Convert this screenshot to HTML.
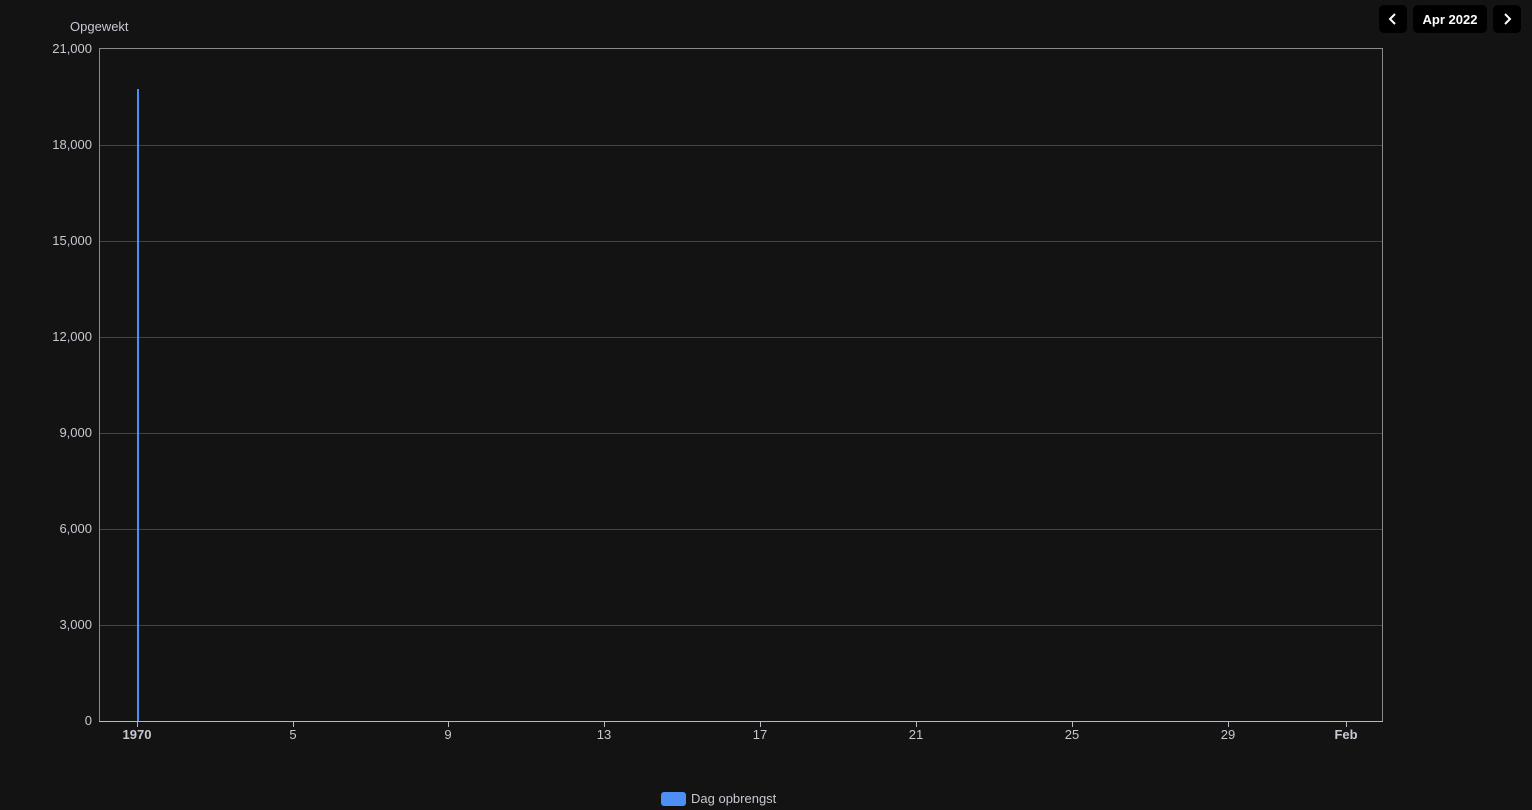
<!DOCTYPE html>
<html><head><meta charset="utf-8"><style>
html,body{margin:0;padding:0;background:#131313;width:1532px;height:810px;overflow:hidden;font-family:"Liberation Sans",sans-serif}
.btn{position:absolute;top:5px;height:28px;background:#000;border-radius:5px;color:#fff;display:flex;align-items:center;justify-content:center;z-index:2}
</style></head><body>
<svg width="1532" height="810" style="position:absolute;left:0;top:0" font-family="Liberation Sans, sans-serif" font-size="13" fill="#c8c8d2">
<g stroke="#444" stroke-width="1">
<line x1="99" x2="1382" y1="145.5" y2="145.5"/>
<line x1="99" x2="1382" y1="241.5" y2="241.5"/>
<line x1="99" x2="1382" y1="337.5" y2="337.5"/>
<line x1="99" x2="1382" y1="433.5" y2="433.5"/>
<line x1="99" x2="1382" y1="529.5" y2="529.5"/>
<line x1="99" x2="1382" y1="625.5" y2="625.5"/>
</g>
<rect x="99.5" y="48.5" width="1283" height="673" fill="none" stroke="#8a8a8a"/>
<line x1="99" x2="1383" y1="721.5" y2="721.5" stroke="#b8b8c0"/>
<line x1="138" x2="138" y1="89" y2="721" stroke="#4d8ff5" stroke-width="2"/>
<g stroke="#b8b8c0">
<line x1="137.5" x2="137.5" y1="722" y2="727"/><line x1="293.5" x2="293.5" y1="722" y2="727"/>
<line x1="448.5" x2="448.5" y1="722" y2="727"/><line x1="604.5" x2="604.5" y1="722" y2="727"/>
<line x1="760.5" x2="760.5" y1="722" y2="727"/><line x1="916.5" x2="916.5" y1="722" y2="727"/>
<line x1="1072.5" x2="1072.5" y1="722" y2="727"/><line x1="1228.5" x2="1228.5" y1="722" y2="727"/>
<line x1="1346.5" x2="1346.5" y1="722" y2="727"/>
</g>
<text x="70" y="31">Opgewekt</text>
<g text-anchor="end">
<text x="92" y="53">21,000</text><text x="92" y="149">18,000</text><text x="92" y="245">15,000</text>
<text x="92" y="341">12,000</text><text x="92" y="437">9,000</text><text x="92" y="533">6,000</text>
<text x="92" y="629">3,000</text><text x="92" y="725">0</text>
</g>
<g text-anchor="middle">
<text x="137" y="739" font-weight="bold">1970</text><text x="293" y="739">5</text><text x="448" y="739">9</text>
<text x="604" y="739">13</text><text x="760" y="739">17</text><text x="916" y="739">21</text>
<text x="1072" y="739">25</text><text x="1228" y="739">29</text><text x="1346" y="739" font-weight="bold">Feb</text>
</g>
<rect x="661" y="792" width="25" height="14" rx="3" fill="#4d8ff5"/>
<text x="691" y="803">Dag opbrengst</text>
</svg>
<div class="btn" style="left:1379px;width:28px"><svg width="14" height="14" viewBox="0 0 14 14"><path d="M9 2 L4 7 L9 12" stroke="#fff" stroke-width="2" fill="none"/></svg></div>
<div class="btn" style="left:1413px;width:74px;font-size:13px;font-weight:bold">Apr 2022</div>
<div class="btn" style="left:1493px;width:28px"><svg width="14" height="14" viewBox="0 0 14 14"><path d="M5 2 L10 7 L5 12" stroke="#fff" stroke-width="2" fill="none"/></svg></div>
</body></html>
